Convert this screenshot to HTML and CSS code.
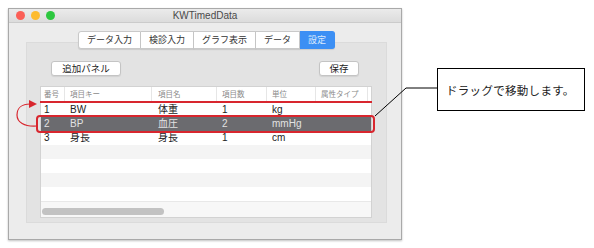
FILE: index.html
```html
<!doctype html>
<html>
  <head>
    <meta charset="utf-8">
    <title>KWTimedData</title>
    <link rel="stylesheet" href="styles.css">
  </head>
  <body>
    <div class="window">
      <div class="titlebar">
        <span class="light red"></span>
        <span class="light yellow"></span>
        <span class="light green"></span>
        <span class="title">KWTimedData</span>
      </div>
      <div class="window-body">
        <div class="tabs">
          <span class="tab">データ入力</span>
          <span class="tab">検診入力</span>
          <span class="tab">グラフ表示</span>
          <span class="tab">データ</span>
          <span class="tab selected">設定</span>
        </div>
        <div class="panel">
          <div class="buttons">
            <button class="btn wide">追加パネル</button>
            <button class="btn">保存</button>
          </div>
          <div class="grid">
            <div class="row head">
              <span>番号</span><span>項目キー</span><span>項目名</span><span>項目数</span><span>単位</span><span>属性タイプ</span><span></span>
            </div>
            <div class="rows">
              <div class="row"><span>1</span><span>BW</span><span>体重</span><span>1</span><span>kg</span><span></span><span></span></div>
              <div class="row picked"><span>2</span><span>BP</span><span>血圧</span><span>2</span><span>mmHg</span><span></span><span></span></div>
              <div class="row"><span>3</span><span>身長</span><span>身長</span><span>1</span><span>cm</span><span></span><span></span></div>
              <div class="row"></div>
              <div class="row"></div>
              <div class="row"></div>
              <div class="row"></div>
              <div class="row"></div>
            </div>
            <div class="scroller"><div class="thumb"></div></div>
          </div>
        </div>
      </div>
    </div>

    <div class="note">ドラッグで移動します。</div>

    <!-- annotations drawn over the screenshot -->
    <svg class="marks" width="594" height="248" viewBox="0 0 594 248">
      <line x1="40" y1="102" x2="372" y2="102" stroke="#d8262e" stroke-width="2"/>
      <rect x="37" y="116" width="337" height="16" rx="3" fill="none" stroke="#d8262e" stroke-width="2"/>
      <path d="M37 126 C24 127 17 122 17 115 C17 108 22 104 30 104" fill="none" stroke="#d8262e" stroke-width="1.2"/>
      <polygon points="29,100 37,104 29,108" fill="#d8262e"/>
      <polyline points="437,88 406,88 375,116" fill="none" stroke="#000" stroke-width="1"/>
    </svg>
  </body>
</html>
```

FILE: styles.css
```css
body {
  margin: 0px;
  padding: 8px;
  position: relative;
  display: flex;
  align-items: flex-start;
  background: #ffffff;
  font-family: "Liberation Sans", "Noto Sans CJK JP", sans-serif;
  color: #222;
}

.window {
  width: 392px;
  height: 230px;
  border: 1px solid #a9a9a9;
  background: #ececec;
  box-shadow: 0 1px 2px rgba(0, 0, 0, 0.25);
  display: flex;
  flex-direction: column;
}

.titlebar {
  height: 15px;
  display: flex;
  align-items: center;
  padding-left: 7px;
  gap: 6px;
  position: relative;
  background: linear-gradient(#ebebeb, #dcdcdc);
  border-bottom: 1px solid #cbcbcb;
}

.light {
  width: 9px;
  height: 9px;
  border-radius: 50%;
}
.red { background: #fb5f57; }
.yellow { background: #fdbb2e; }
.green { background: #2dc73f; }

.title {
  position: absolute;
  left: 0; right: 0;
  text-align: center;
  font-size: 10px;
  color: #4a4a4a;
}

.window-body {
  padding: 8px 14px 16px 17px;
  display: flex;
  flex-direction: column;
}

.tabs {
  display: flex;
  justify-content: center;
  margin-bottom: -7px;
  position: relative;
  z-index: 1;
}

.tab {
  height: 16px;
  line-height: 16px;
  padding: 0 8px;
  font-size: 9px;
  color: #333;
  background: #ffffff;
  border: 1px solid #c9c9c9;
  border-left: none;
  box-shadow: 0 1px 1px rgba(0, 0, 0, 0.1);
}
.tab:first-child {
  border-left: 1px solid #c9c9c9;
  border-radius: 3px 0 0 3px;
}
.tab.selected {
  background: #3c8ff4;
  border-color: #3c8ff4;
  color: #d9e9fd;
  border-radius: 0 3px 3px 0;
}

.panel {
  height: 179px;
  border: 1px solid #dbdbdb;
  background: #e3e3e3;
  display: flex;
  flex-direction: column;
}

.buttons {
  display: flex;
  justify-content: space-between;
  padding: 18px 27px 0 24px;
}

.btn {
  height: 15px;
  width: 40px;
  padding: 0;
  font-family: "Noto Sans CJK JP", sans-serif;
  font-size: 9.5px;
  line-height: 13px;
  color: #222;
  background: #ffffff;
  border: 1px solid #c4c4c4;
  border-radius: 3px;
  box-shadow: 0 1px 1px rgba(0, 0, 0, 0.08);
}
.btn.wide { width: 70px; }

.grid {
  margin: 10px 14px 0 13px;
  height: 130px;
  border: 1px solid #d2d2d2;
  background: #ffffff;
  display: flex;
  flex-direction: column;
}

.row {
  display: grid;
  grid-template-columns: 24px 87px 65px 50px 49px 52px 1fr;
  height: 14px;
  line-height: 14px;
  font-size: 10px;
}
.row span {
  padding-left: 5px;
  white-space: nowrap;
  overflow: hidden;
}
.row span:first-child { padding-left: 3px; }
.row span:nth-child(3) { padding-left: 6px; }

.row.head {
  height: 15px;
  line-height: 15px;
  font-size: 7.5px;
  color: #8a8a8a;
  border-bottom: 1px solid #e4e4e4;
}
.row.head span { border-right: 1px solid #e6e6e6; }
.row.head span:last-child { border-right: none; }

.rows {
  height: 99px;
  overflow: hidden;
}
.rows .row:nth-child(even) { background: #f4f4f4; }
.rows .row.picked {
  background: #6b6b6f;
  color: #e2e2e2;
}

.scroller {
  height: 15px;
  border-top: 1px solid #e8e8e8;
  background: #f7f7f7;
}
.thumb {
  margin: 6px 0 0 1px;
  width: 122px;
  height: 7px;
  border-radius: 4px;
  background: #c2c2c2;
}

.note {
  margin: 60px 0 0 35px;
  box-sizing: border-box;
  width: 148px;
  height: 43px;
  border: 1px solid #000;
  display: flex;
  align-items: center;
  padding-left: 8px;
  font-family: "Noto Sans CJK JP", sans-serif;
  font-size: 11.5px;
  letter-spacing: 0.3px;
  color: #222;
}

.marks {
  position: absolute;
  left: 0; top: 0;
  pointer-events: none;
}
```
